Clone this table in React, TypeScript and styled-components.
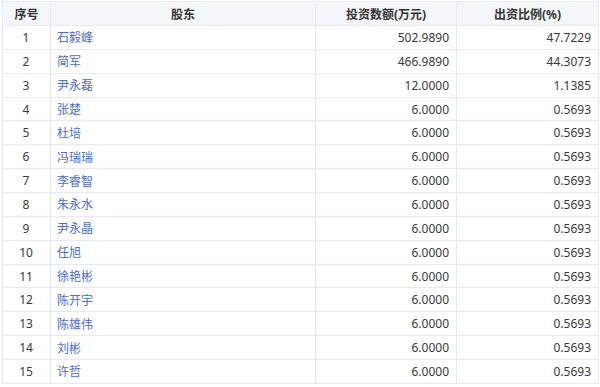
import React from 'react'
import styled, { createGlobalStyle } from 'styled-components'

interface Holder {
  name: string
  amount: string
  ratio: string
}

const holders: Holder[] = [
  { name: '石毅峰', amount: '502.9890', ratio: '47.7229' },
  { name: '简军', amount: '466.9890', ratio: '44.3073' },
  { name: '尹永磊', amount: '12.0000', ratio: '1.1385' },
  { name: '张楚', amount: '6.0000', ratio: '0.5693' },
  { name: '杜培', amount: '6.0000', ratio: '0.5693' },
  { name: '冯瑞瑞', amount: '6.0000', ratio: '0.5693' },
  { name: '李睿智', amount: '6.0000', ratio: '0.5693' },
  { name: '朱永水', amount: '6.0000', ratio: '0.5693' },
  { name: '尹永晶', amount: '6.0000', ratio: '0.5693' },
  { name: '任旭', amount: '6.0000', ratio: '0.5693' },
  { name: '徐艳彬', amount: '6.0000', ratio: '0.5693' },
  { name: '陈开宇', amount: '6.0000', ratio: '0.5693' },
  { name: '陈雄伟', amount: '6.0000', ratio: '0.5693' },
  { name: '刘彬', amount: '6.0000', ratio: '0.5693' },
  { name: '许哲', amount: '6.0000', ratio: '0.5693' },
]

const GlobalStyle = createGlobalStyle`
  body {
    margin: 0;
    background: #fff;
    font-family: 'Noto Sans', 'Noto Sans CJK SC', sans-serif;
  }
`

const Wrapper = styled.div`
  padding: 1px 2px 0 2px;
`

const Table = styled.table`
  width: 596px;
  border-collapse: collapse;
  table-layout: fixed;
  font-size: 12px;
  color: #3a3a3a;
`

const HeadCell = styled.th`
  height: 23px;
  padding: 0;
  background: #f5f6fa;
  border: 1px solid #e6e9f1;
  font-weight: bold;
  color: #333;
  text-align: center;
`

const Cell = styled.td<{ $align?: 'left' | 'center' | 'right' }>`
  height: 22.87px;
  padding: 0 7px 0 6px;
  border: 1px solid #e6e9f1;
  text-align: ${(props) => props.$align || 'left'};
  white-space: nowrap;
`

const NameLink = styled.a`
  color: #4a6cd8;
  text-decoration: none;
  cursor: pointer;
`

const App: React.FC = () => {
  return (
    <Wrapper>
      <GlobalStyle />
      <Table>
        <colgroup>
          <col style={{ width: 48 }} />
          <col style={{ width: 265 }} />
          <col style={{ width: 141 }} />
          <col style={{ width: 142 }} />
        </colgroup>
        <thead>
          <tr>
            <HeadCell>序号</HeadCell>
            <HeadCell>股东</HeadCell>
            <HeadCell>投资数额(万元)</HeadCell>
            <HeadCell>出资比例(%)</HeadCell>
          </tr>
        </thead>
        <tbody>
          {holders.map((h, i) => (
            <tr key={h.name}>
              <Cell $align="center">{i + 1}</Cell>
              <Cell>
                <NameLink>{h.name}</NameLink>
              </Cell>
              <Cell $align="right">{h.amount}</Cell>
              <Cell $align="right">{h.ratio}</Cell>
            </tr>
          ))}
        </tbody>
      </Table>
    </Wrapper>
  )
}

export default App
